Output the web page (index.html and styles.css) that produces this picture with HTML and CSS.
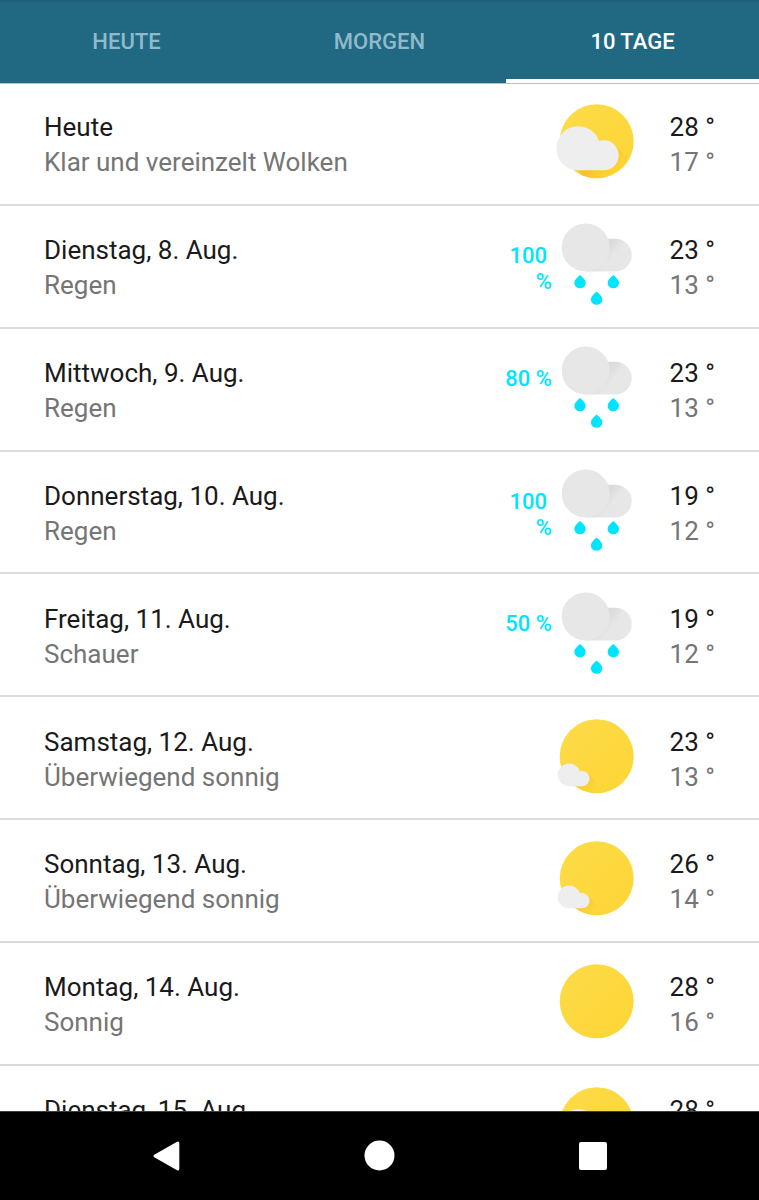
FILE: index.html
```html
<!DOCTYPE html>
<html lang="de">
  <head>
    <meta charset="UTF-8" />
    <meta name="viewport" content="width=device-width, initial-scale=1.0" />
    <title>Wetter - 10 Tage</title>
    <link rel="stylesheet" href="styles.css">
  </head>
  <body>
    <!-- Weather icons, reused in the rows -->
    <svg class="sprite" width="0" height="0">
      <defs>
        <linearGradient id="sun-fill" x1="0" y1="0" x2="1" y2="1">
          <stop offset="0" stop-color="#fddc48" />
          <stop offset="1" stop-color="#fdd535" />
        </linearGradient>
        <linearGradient id="sun-shade" gradientUnits="userSpaceOnUse" x1="45" y1="50" x2="72" y2="77">
          <stop offset="0.4" stop-color="#f7b924" stop-opacity="0.7" />
          <stop offset="1" stop-color="#f9c62a" stop-opacity="0" />
        </linearGradient>
        <linearGradient id="small-shade" gradientUnits="userSpaceOnUse" x1="32" y1="66" x2="46" y2="80">
          <stop offset="0" stop-color="#f5b728" stop-opacity="0.8" />
          <stop offset="1" stop-color="#f9c62a" stop-opacity="0" />
        </linearGradient>
        <linearGradient id="cloud-shade" gradientUnits="userSpaceOnUse" x1="58" y1="30" x2="70" y2="40">
          <stop offset="0" stop-color="#dadada" />
          <stop offset="0.7" stop-color="#e7e7e7" />
        </linearGradient>
        <clipPath id="sun-clip"><circle cx="47.7" cy="47.3" r="37" /></clipPath>
      </defs>
      <symbol id="sunny" viewBox="0 0 96 96">
        <circle cx="47.7" cy="47.3" r="37" fill="url(#sun-fill)" />
      </symbol>
      <symbol id="partly" viewBox="0 0 96 96">
        <circle cx="47.7" cy="47.3" r="37" fill="url(#sun-fill)" />
        <path d="M65.3 50.7l16 16-10 20H35l-5.700-10.700H54.700z" fill="url(#sun-shade)" clip-path="url(#sun-clip)" />
        <path d="M29.300 76.300a22 22 0 1 1 20.800-29.300q2.200-.7 4.600-.7a15 15 0 0 1 0 30z" fill="#eee" />
      </symbol>
      <symbol id="mostly" viewBox="0 0 96 96">
        <circle cx="47.7" cy="47.3" r="37" fill="url(#sun-fill)" />
        <path d="M38.400 64.200l14 14-6 10-20-11h6.600z" fill="url(#small-shade)" clip-path="url(#sun-clip)" />
        <path d="M20.700 77.200a11.400 11.400 0 1 1 10.200-14.900q1-.3 2.100-.3a7.600 7.600 0 0 1 0 15.200z" fill="#eee" />
      </symbol>
      <symbol id="rain" viewBox="0 0 96 96">
        <path d="M36.700 21.700h29.600a16.400 16.400 0 0 1 0 32.800H36.700z" fill="url(#cloud-shade)" />
        <circle cx="36.700" cy="30.500" r="24" fill="#e7e7e7" />
        <path id="drop" d="M31 58.100c3.200 2.800 5.700 5 5.700 7.900a5.700 5.300 0 0 1-11.400 0c0-2.900 2.500-5.100 5.700-7.900z" fill="#00e5ff" />
        <use href="#drop" x="33.300" />
        <use href="#drop" x="16.600" y="16.500" />
      </symbol>
    </svg>

    <!-- Tabs -->
    <nav class="tabs">
      <a class="tab">HEUTE</a>
      <a class="tab">MORGEN</a>
      <a class="tab active">10 TAGE</a>
    </nav>

    <!-- Forecast -->
    <main class="forecast">
      <div class="day">
        <div class="info"><div class="date">Heute</div><div class="desc">Klar und vereinzelt Wolken</div></div>
        <svg class="icon"><use href="#partly" /></svg>
        <div class="temp"><div class="high">28 °</div><div class="low">17 °</div></div>
      </div>
      <div class="day">
        <div class="info"><div class="date">Dienstag, 8. Aug.</div><div class="desc">Regen</div></div>
        <div class="chance wrap"><span>100</span> <span>%</span></div>
        <svg class="icon"><use href="#rain" /></svg>
        <div class="temp"><div class="high">23 °</div><div class="low">13 °</div></div>
      </div>
      <div class="day">
        <div class="info"><div class="date">Mittwoch, 9. Aug.</div><div class="desc">Regen</div></div>
        <div class="chance">80 %</div>
        <svg class="icon"><use href="#rain" /></svg>
        <div class="temp"><div class="high">23 °</div><div class="low">13 °</div></div>
      </div>
      <div class="day">
        <div class="info"><div class="date">Donnerstag, 10. Aug.</div><div class="desc">Regen</div></div>
        <div class="chance wrap"><span>100</span> <span>%</span></div>
        <svg class="icon"><use href="#rain" /></svg>
        <div class="temp"><div class="high">19 °</div><div class="low">12 °</div></div>
      </div>
      <div class="day">
        <div class="info"><div class="date">Freitag, 11. Aug.</div><div class="desc">Schauer</div></div>
        <div class="chance">50 %</div>
        <svg class="icon"><use href="#rain" /></svg>
        <div class="temp"><div class="high">19 °</div><div class="low">12 °</div></div>
      </div>
      <div class="day">
        <div class="info"><div class="date">Samstag, 12. Aug.</div><div class="desc">Überwiegend sonnig</div></div>
        <svg class="icon"><use href="#mostly" /></svg>
        <div class="temp"><div class="high">23 °</div><div class="low">13 °</div></div>
      </div>
      <div class="day">
        <div class="info"><div class="date">Sonntag, 13. Aug.</div><div class="desc">Überwiegend sonnig</div></div>
        <svg class="icon"><use href="#mostly" /></svg>
        <div class="temp"><div class="high">26 °</div><div class="low">14 °</div></div>
      </div>
      <div class="day">
        <div class="info"><div class="date">Montag, 14. Aug.</div><div class="desc">Sonnig</div></div>
        <svg class="icon"><use href="#sunny" /></svg>
        <div class="temp"><div class="high">28 °</div><div class="low">16 °</div></div>
      </div>
      <div class="day">
        <div class="info"><div class="date">Dienstag, 15. Aug.</div></div>
        <svg class="icon"><use href="#partly" /></svg>
        <div class="temp"><div class="high">28 °</div></div>
      </div>
    </main>

    <!-- Android navigation bar -->
    <footer class="navbar">
      <svg width="32" height="32" viewBox="0 0 32 32"><path d="M5 16L27.800 3v26z" fill="#fff" stroke="#fff" stroke-width="3" stroke-linejoin="round" /></svg>
      <svg width="32" height="32" viewBox="0 0 32 32"><circle cx="15.500" cy="15.500" r="15" fill="#fff" /></svg>
      <svg width="32" height="32" viewBox="0 0 32 32"><rect x="2" y="2" width="28" height="28" rx="2" fill="#fff" /></svg>
    </footer>
  </body>
</html>
```
FILE: styles.css
```css
* {
  box-sizing: border-box;
}

body {
  margin: 0;
  height: 1200px;
  display: flex;
  flex-direction: column;
  overflow: hidden;
  background-color: white;
  color: #1a1a1a;
  font-family: Roboto, "Liberation Sans", sans-serif;
  font-size: 26px;
}

.sprite {
  position: absolute;
}

/* Tabs */
.tabs {
  display: grid;
  grid-template-columns: repeat(3, 1fr);
  flex: none;
  height: 84px;
  background: linear-gradient(#1c5b73, #216983 3px);
  border-bottom: 1px solid #b9c4c8;
}

.tab {
  display: flex;
  align-items: center;
  justify-content: center;
  padding-top: 4px;
  border-bottom: 4px solid transparent;
  color: #8fbacb;
  font-size: 22px;
  font-weight: 500;
}

.tab.active {
  color: white;
  border-bottom-color: white;
}

/* Forecast rows */
.forecast {
  flex: 1;
  min-height: 0;
  overflow: hidden;
}

.day {
  display: flex;
  align-items: flex-start;
  height: 122.85px;
  padding: 11.4px 44px 0;
  border-bottom: 2px solid #dadada;
}

.day:first-child {
  height: 121.85px;
  padding-top: 10.4px;
}

.info {
  flex: 1;
  padding-top: 16px;
  line-height: 35px;
  white-space: nowrap;
}

.desc,
.low {
  color: #757575;
}

.chance {
  width: 60px;
  padding-top: 25.6px;
  color: #00e5ff;
  font-size: 22px;
  font-weight: 500;
  line-height: 26px;
  text-align: right;
  margin-right: -3px;
}

.chance.wrap {
  display: flex;
  flex-direction: column;
}

.chance.wrap span:first-child {
  padding-right: 5px;
}

.icon {
  flex: none;
  width: 96px;
  height: 96px;
}

.temp {
  width: 70px;
  padding-top: 16px;
  line-height: 35px;
  text-align: right;
  white-space: nowrap;
}

/* Navigation bar */
.navbar {
  flex: none;
  height: 89px;
  display: flex;
  align-items: center;
  justify-content: space-between;
  padding: 0 150px;
  background-color: black;
  border-top: 1px solid #3a4144;
}
```
